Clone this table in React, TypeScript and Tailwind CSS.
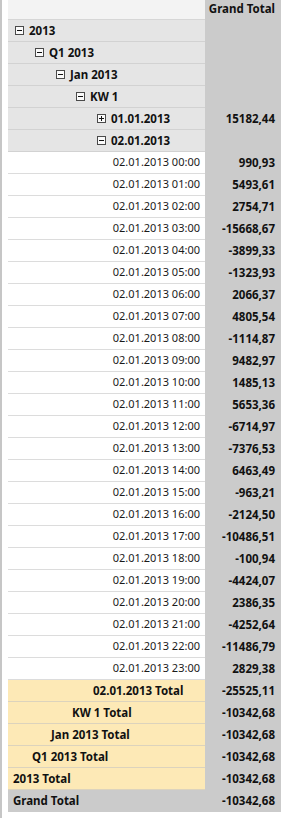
import React from "react";

type Group = { label: string; level: number; open: boolean; value?: string };

const groups: Group[] = [
  { label: "2013", level: 0, open: true },
  { label: "Q1 2013", level: 1, open: true },
  { label: "Jan 2013", level: 2, open: true },
  { label: "KW 1", level: 3, open: true },
  { label: "01.01.2013", level: 4, open: false, value: "15182,44" },
  { label: "02.01.2013", level: 4, open: true },
];

const hours = [
  "990,93", "5493,61", "2754,71", "-15668,67", "-3899,33", "-1323,93",
  "2066,37", "4805,54", "-1114,87", "9482,97", "1485,13", "5653,36",
  "-6714,97", "-7376,53", "6463,49", "-963,21", "-2124,50", "-10486,51",
  "-100,94", "-4424,07", "2386,35", "-4252,64", "-11486,79", "2829,38",
];

const totals = [
  { label: "02.01.2013 Total", pad: "pl-[85px]", value: "-25525,11" },
  { label: "KW 1 Total", pad: "pl-[64px]", value: "-10342,68" },
  { label: "Jan 2013 Total", pad: "pl-[43px]", value: "-10342,68" },
  { label: "Q1 2013 Total", pad: "pl-[24px]", value: "-10342,68" },
  { label: "2013 Total", pad: "pl-[5px]", value: "-10342,68" },
];

const groupPad = ["pl-[7px]", "pl-[27px]", "pl-[48px]", "pl-[68px]", "pl-[89px]"];

// small expand / collapse box
const Toggle = ({ open }: { open: boolean }) => (
  <svg width="9" height="9" viewBox="0 0 9 9" className="shrink-0">
    <rect x="0.5" y="0.5" width="8" height="8" fill="#fafafa" stroke="#4a4a4a" />
    <line x1="2" y1="4.5" x2="7" y2="4.5" stroke="#111" />
    {!open && <line x1="4.5" y1="2" x2="4.5" y2="7" stroke="#111" />}
  </svg>
);

const ValueCell = ({ value }: { value?: string }) => (
  <div className="w-[76px] bg-[#cbcbcb] flex items-center justify-end pr-[6px] font-bold text-[11.5px] text-[#111]">
    {value}
  </div>
);

export default function App() {
  return (
    <div
      className="flex h-[818px] w-[294px] bg-white text-[#111]"
      style={{ fontFamily: '"Noto Sans", "Open Sans", sans-serif' }}
    >
      <div className="w-[2px] bg-[#c6c6c6]" />
      <div className="w-[6px]" />
      <div className="w-[273px] flex flex-col">
        {/* header */}
        <div className="flex h-[20px]">
          <div className="w-[197px] bg-[#f3f3f3] border-b border-[#d6d6d6]" />
          <div className="w-[76px] bg-[#cbcbcb] flex items-start justify-end pr-[6px] pt-[1px] font-bold text-[11.5px] leading-[16px]">
            Grand Total
          </div>
        </div>

        {groups.map((g) => (
          <div key={g.label} className="flex h-[22px]">
            <div
              className={`w-[197px] bg-[#e5e5e5] border-b border-[#d2d2d2] flex items-center gap-[5px] font-bold text-[11.5px] ${groupPad[g.level]}`}
            >
              <Toggle open={g.open} />
              <span>{g.label}</span>
            </div>
            <ValueCell value={g.value} />
          </div>
        ))}

        {hours.map((v, i) => (
          <div key={i} className="flex h-[22px]">
            <div className="w-[197px] bg-white border-b border-[#dcdcdc] flex items-center justify-end pr-[5px] text-[11px] text-[#1a1a1a]">
              02.01.2013 {String(i).padStart(2, "0")}:00
            </div>
            <ValueCell value={v} />
          </div>
        ))}

        {totals.map((t) => (
          <div key={t.label} className="flex h-[22px]">
            <div
              className={`w-[197px] bg-[#fde9b6] border-b border-[#dcd3bd] flex items-center font-bold text-[11.5px] ${t.pad}`}
            >
              {t.label}
            </div>
            <ValueCell value={t.value} />
          </div>
        ))}

        <div className="flex h-[22px] bg-[#cbcbcb]">
          <div className="w-[197px] flex items-center pl-[5px] font-bold text-[11.5px]">
            Grand Total
          </div>
          <ValueCell value="-10342,68" />
        </div>
      </div>
    </div>
  );
}
